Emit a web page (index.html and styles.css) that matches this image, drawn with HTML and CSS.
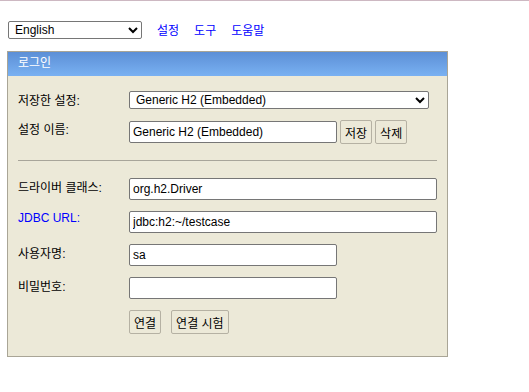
FILE: index.html
```html
<!DOCTYPE html>
<html lang="ko">
<head>
    <meta charset="UTF-8">
    <title>H2 Console</title>
    <link rel="stylesheet" href="styles.css">
</head>
<body>
    <div class="toolbar">
        <select class="lang">
            <option>English</option>
        </select>
        <a href="#">설정</a>
        <a href="#">도구</a>
        <a href="#">도움말</a>
    </div>

    <!-- 로그인 -->
    <div class="login">
        <div class="login-title">로그인</div>
        <div class="login-body">
            <div class="row row-saved">
                <label>저장한 설정:</label>
                <select class="saved">
                    <option>Generic H2 (Embedded)</option>
                </select>
            </div>
            <div class="row row-name">
                <label>설정 이름:</label>
                <div class="inline">
                    <input type="text" class="short" value="Generic H2 (Embedded)">
                    <button>저장</button>
                    <button>삭제</button>
                </div>
            </div>

            <hr>

            <div class="row">
                <label>드라이버 클래스:</label>
                <input type="text" class="long" value="org.h2.Driver">
            </div>
            <div class="row">
                <label class="blue">JDBC URL:</label>
                <input type="text" class="long" value="jdbc:h2:~/testcase">
            </div>
            <div class="row">
                <label>사용자명:</label>
                <input type="text" class="short" value="sa">
            </div>
            <div class="row">
                <label>비밀번호:</label>
                <input type="password" class="short">
            </div>
            <div class="row row-buttons">
                <span></span>
                <div class="inline">
                    <button>연결</button>
                    <button class="gap">연결 시험</button>
                </div>
            </div>
        </div>
    </div>
</body>
</html>
```

FILE: styles.css
```css
body {
    margin: 0;
    padding: 0 7px;
    border-top: 1px solid #cdb8c2;
    font-family: "Liberation Sans", "Noto Sans CJK KR", sans-serif;
    font-size: 12px;
    color: #000;
    background: #fff;
}

.toolbar {
    display: flex;
    align-items: center;
    height: 18px;
    margin-top: 20px;
    padding-left: 1px;
}

.toolbar a {
    color: #0000ff;
    text-decoration: none;
    margin-left: 15px;
    position: relative;
    top: -1px;
}

select {
    font-family: inherit;
    font-size: 12px;
    height: 18px;
    padding: 0 0 0 2px;
    border: 1px solid #767676;
    border-radius: 2px;
    background: #fff;
    box-sizing: border-box;
}

.lang {
    width: 134px;
}

.login {
    width: 441px;
    margin-top: 12px;
    border: 1px solid #a9a596;
    background-color: #ece9d8;
    box-sizing: border-box;
    height: 306px;
}

.login-title {
    height: 24px;
    line-height: 23px;
    padding-left: 10px;
    color: #fff;
    font-size: 12px;
    background: linear-gradient(to bottom, #5c8fd6, #79b1f2);
}

.login-body {
    padding: 15px 10px 0 10px;
}

.row {
    display: grid;
    grid-template-columns: 111px 1fr;
    align-items: start;
    margin-bottom: 11px;
}

.row label {
    padding-top: 0;
}

.row-name {
    margin-bottom: 0;
}

.blue {
    color: #0000ff;
}

.saved {
    width: 300px;
}

input {
    font-family: inherit;
    font-size: 12px;
    height: 22px;
    padding: 0 3px;
    border: 1px solid #767676;
    border-radius: 2px;
    box-sizing: border-box;
    background: #fff;
}

.short {
    width: 208px;
}

.long {
    width: 308px;
}

.inline {
    display: flex;
    align-items: center;
}

button {
    font-family: inherit;
    font-size: 12px;
    height: 24px;
    padding: 0 4px;
    margin-left: 3px;
    border: 1px solid #b5b1a3;
    border-radius: 2px;
    background: #ece9d8;
    color: #000;
}

.row-buttons button {
    margin-left: 0;
}

.row-buttons .gap {
    margin-left: 10px;
}

hr {
    border: 0;
    border-top: 1px solid #a8a59a;
    margin: 16px 0 17px 0;
    width: 419px;
}
```
